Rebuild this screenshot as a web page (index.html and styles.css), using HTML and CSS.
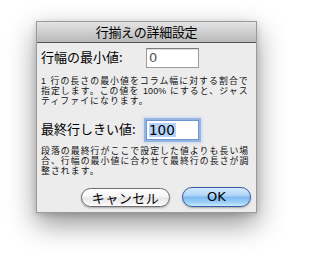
FILE: index.html
```html
<!DOCTYPE html>
<html lang="ja">
<head>
<meta charset="utf-8">
<link rel="stylesheet" href="styles.css">
</head>
<body>
<div class="dialog">
  <div class="titlebar">行揃えの詳細設定</div>
  <div class="content">
    <div class="row row-first">
      <span class="label">行幅の最小値:</span>
      <div class="field"><span class="value">0</span></div>
    </div>
    <p class="note note-first">1 行の長さの最小値をコラム幅に対する割合で<br>指定します。この値を <span class="latin">100%</span> にすると、ジャス<br>ティファイになります。</p>
    <div class="row row-second">
      <span class="label">最終行しきい値:</span>
      <div class="field focused"><span class="value selected">100</span></div>
    </div>
    <p class="note note-second">段落の最終行がここで設定した値よりも長い場<br>合、行幅の最小値に合わせて最終行の長さが調<br>整されます。</p>
    <div class="buttons">
      <div class="btn cancel">キャンセル</div>
      <div class="btn ok">OK</div>
    </div>
  </div>
</div>
</body>
</html>
```
FILE: styles.css
```css
html, body {
  margin: 0;
  padding: 0;
  background: #ffffff;
}
body {
  width: 293px;
  height: 256px;
  overflow: hidden;
  font-family: "Noto Sans CJK JP", "Noto Sans", sans-serif;
  color: #000;
}
.dialog {
  box-sizing: border-box;
  width: 221px;
  margin: 21px 0 0 36px;
  border: 1px solid #9a9a9a;
  background: #ececec;
  box-shadow: 0 11px 26px rgba(0, 0, 0, 0.42), 0 2px 6px rgba(0, 0, 0, 0.15);
}
.titlebar {
  height: 20px;
  line-height: 20px;
  text-align: center;
  font-size: 13px;
  letter-spacing: -0.3px;
  background: linear-gradient(to bottom, #e4e4e4, #b9b9b9);
  border-bottom: 1px solid #555555;
}
.content {
  padding: 5px 5px 5px 4px;
}
.row {
  display: flex;
  align-items: center;
  height: 20px;
}
.label {
  width: 105px;
  font-size: 13px;
  line-height: 16px;
  margin-bottom: 3px;
  white-space: nowrap;
}
.field {
  box-sizing: border-box;
  width: 53px;
  height: 20px;
  background: #fff;
  border: 1px solid #9c9c9c;
  border-top-color: #7c7c7c;
  box-shadow: inset 0 1px 1px rgba(0, 0, 0, 0.15);
  display: flex;
  align-items: center;
  padding-left: 2px;
}
.field.focused {
  border: 1px solid #6d95cf;
  box-shadow: 0 0 0 2px rgba(120, 160, 220, 0.65), 0 0 3px 3px rgba(140, 180, 235, 0.35);
}
.value {
  font-family: "DejaVu Sans", sans-serif;
  font-size: 13px;
  line-height: 14px;
  color: #555;
}
.selected {
  color: #000;
  background: #b5d3fb;
  font-size: 13.5px;
  padding: 0 1px 0 0;
}
.note {
  margin: 0;
  font-family: "Liberation Sans", "Noto Sans CJK JP", sans-serif;
  font-size: 8.9px;
  line-height: 10px;
  letter-spacing: 1.05px;
  white-space: nowrap;
  color: #111;
}
.latin {
  letter-spacing: 0.2px;
}
.note-first {
  margin-top: 8px;
}
.row-second {
  margin-top: 14px;
}
.note-second {
  margin-top: 6px;
}
.buttons {
  display: flex;
  justify-content: flex-end;
  align-items: flex-end;
  gap: 12px;
  margin-top: 11px;
  height: 20px;
}
.btn {
  box-sizing: border-box;
  height: 20px;
  border-radius: 10px;
  display: flex;
  align-items: center;
  justify-content: center;
  font-size: 13px;
  line-height: 16px;
  box-shadow: 0 1px 2px rgba(0, 0, 0, 0.3);
}
.cancel {
  width: 89px;
  height: 19px;
  border: 1px solid #6f6f6f;
  background: linear-gradient(to bottom, #ffffff 0%, #f6f6f6 45%, #e6e6e6 52%, #f4f4f4 85%, #ffffff 100%);
  letter-spacing: 0.5px;
}
.ok {
  width: 69px;
  border: 1px solid #3a5da3;
  background: linear-gradient(to bottom, #d6eafd 0%, #b2d6f8 40%, #80bbf1 52%, #9ccff9 80%, #c9ecff 100%);
  font-family: "DejaVu Sans", sans-serif;
  font-size: 13px;
}
```
